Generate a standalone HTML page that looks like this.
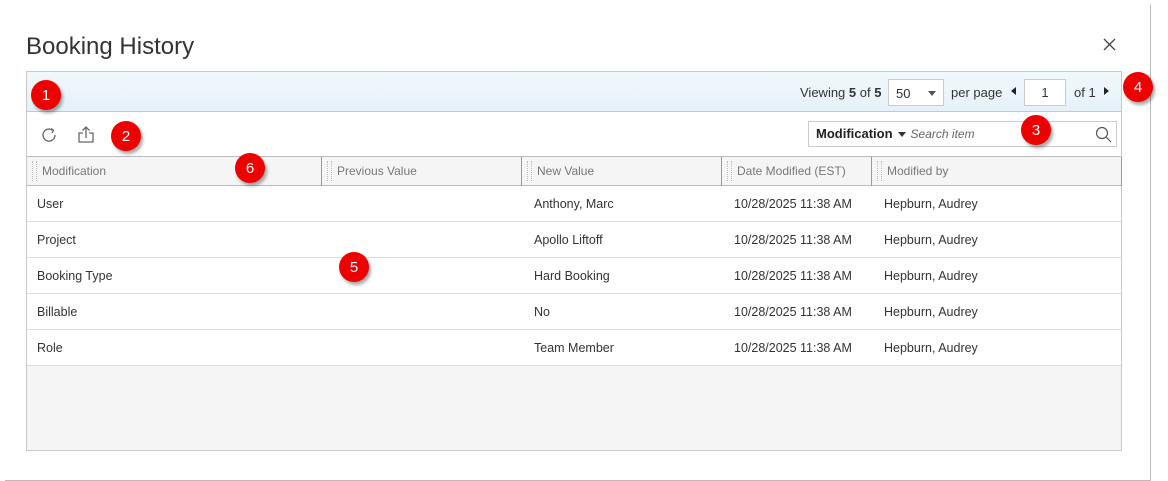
<!DOCTYPE html>
<html><head><style>
*{box-sizing:border-box;margin:0;padding:0}
body{width:1168px;height:481px;background:#fff;font-family:"Liberation Sans",sans-serif;position:relative;overflow:hidden;color:#333}
.dlg{position:absolute;left:5px;top:5px;width:1146px;height:476px;border-right:1px solid #bbb;border-bottom:1px solid #bbb}
h1{position:absolute;left:26px;top:33px;font-size:24px;font-weight:normal;color:#333}
.grid{position:absolute;left:26px;top:71px;width:1096px;height:380px;border:1px solid #c8c8c8;background:#f5f5f5}
.top{position:absolute;left:0;top:0;width:100%;height:40px;background:linear-gradient(#f1f8fc,#e5f1f8);border-bottom:1px solid #c8c8c8;font-size:13px}
.tb{position:absolute;left:0;top:40px;width:100%;height:44px;background:#fff}
.hd{position:absolute;left:0;top:84px;width:100%;height:30px;background:#f5f5f5;border-top:1px solid #bbb;border-bottom:1px solid #bbb;font-size:12px;color:#777}
.hd div{position:absolute;top:0;height:29px;line-height:29px;padding-left:15px;border-right:1px solid #999}
.hd div:before{content:"";position:absolute;left:5px;top:4px;width:3px;height:20px;border-left:1px dotted #bbb;border-right:1px dotted #bbb}
.row{position:absolute;left:0;width:100%;height:36px;background:#fff;border-bottom:1px solid #ddd;font-size:12.5px;color:#333}
.row span{position:absolute;top:11px}
.b{position:absolute;width:30px;height:30px;border-radius:50%;background:#e00;color:#fff;font-size:15px;text-align:center;line-height:31px;box-shadow:2px 3px 3px rgba(0,0,0,.35)}
</style></head><body>
<div class="dlg"></div>
<h1>Booking History</h1>
<svg style="position:absolute;left:1103px;top:38px" width="13" height="13" viewBox="0 0 13 13" stroke="#444" stroke-width="1.3"><path d="M1 1l11 11M12 1L1 12"/></svg>
<div class="grid">
 <div class="top">
  <span style="position:absolute;left:773px;top:13px">Viewing <b style="font-weight:600">5</b> of <b style="font-weight:600">5</b></span>
  <div style="position:absolute;left:861px;top:7px;width:56px;height:27px;background:#fff;border:1px solid #ccc;padding:6px 7px">50<span style="position:absolute;right:7px;top:11px;border:4px solid transparent;border-top:5px solid #555"></span></div>
  <span style="position:absolute;left:924px;top:13px">per page</span>
  <span style="position:absolute;left:984px;top:15px;border:4px solid transparent;border-right:5px solid #222;border-left:0"></span>
  <div style="position:absolute;left:997px;top:7px;width:42px;height:27px;background:#fff;border:1px solid #ccc;text-align:center;line-height:25px">1</div>
  <span style="position:absolute;left:1047px;top:13px">of 1</span>
  <span style="position:absolute;left:1077px;top:15px;border:4px solid transparent;border-left:5px solid #222;border-right:0"></span>
 </div>
 <div class="tb">
  <svg style="position:absolute;left:13px;top:14px" width="18" height="18" viewBox="0 0 18 18" fill="none" stroke="#666" stroke-width="1.3"><path d="M15 9A6 6 0 1 1 12.5 4.2"/><path d="M11 2.5l2.5 1.8-1.5 2.6" /></svg>
  <svg style="position:absolute;left:50px;top:13px" width="18" height="19" viewBox="0 0 18 19" fill="none" stroke="#666" stroke-width="1.3"><path d="M6 8H2v9h14V8h-4"/><path d="M9 13V2M5.5 5.5L9 2l3.5 3.5"/></svg>
  <div style="position:absolute;left:781px;top:9px;width:309px;height:26px;border:1px solid #ccc;font-size:13px;line-height:24px;padding-left:7px">
   <b style="color:#222">Modification</b><span style="display:inline-block;margin:0 5px 2px 5px;border:4px solid transparent;border-top:5px solid #333;vertical-align:middle;height:0;position:relative;top:3px"></span><i style="color:#666;font-size:12px">Search item</i>
   <svg style="position:absolute;right:4px;top:4px" width="17" height="17" viewBox="0 0 17 17" fill="none" stroke="#555" stroke-width="1.2"><circle cx="7" cy="7" r="5.5"/><path d="M11 11l5 5"/></svg>
  </div>
 </div>
 <div class="hd">
  <div style="left:0;width:295px">Modification</div>
  <div style="left:295px;width:200px">Previous Value</div>
  <div style="left:495px;width:200px">New Value</div>
  <div style="left:695px;width:150px">Date Modified (EST)</div>
  <div style="left:845px;width:250px">Modified by</div>
 </div>
 <div class="row" style="top:114px"><span style="left:10px">User</span><span style="left:507px">Anthony, Marc</span><span style="left:707px">10/28/2025 11:38 AM</span><span style="left:857px">Hepburn, Audrey</span></div>
 <div class="row" style="top:150px"><span style="left:10px">Project</span><span style="left:507px">Apollo Liftoff</span><span style="left:707px">10/28/2025 11:38 AM</span><span style="left:857px">Hepburn, Audrey</span></div>
 <div class="row" style="top:186px"><span style="left:10px">Booking Type</span><span style="left:507px">Hard Booking</span><span style="left:707px">10/28/2025 11:38 AM</span><span style="left:857px">Hepburn, Audrey</span></div>
 <div class="row" style="top:222px"><span style="left:10px">Billable</span><span style="left:507px">No</span><span style="left:707px">10/28/2025 11:38 AM</span><span style="left:857px">Hepburn, Audrey</span></div>
 <div class="row" style="top:258px"><span style="left:10px">Role</span><span style="left:507px">Team Member</span><span style="left:707px">10/28/2025 11:38 AM</span><span style="left:857px">Hepburn, Audrey</span></div>
</div>
<div class="b" style="left:31px;top:80px">1</div>
<div class="b" style="left:111px;top:121px">2</div>
<div class="b" style="left:1021px;top:115px">3</div>
<div class="b" style="left:1123px;top:72px">4</div>
<div class="b" style="left:339px;top:252px">5</div>
<div class="b" style="left:235px;top:153px">6</div>
</body></html>
